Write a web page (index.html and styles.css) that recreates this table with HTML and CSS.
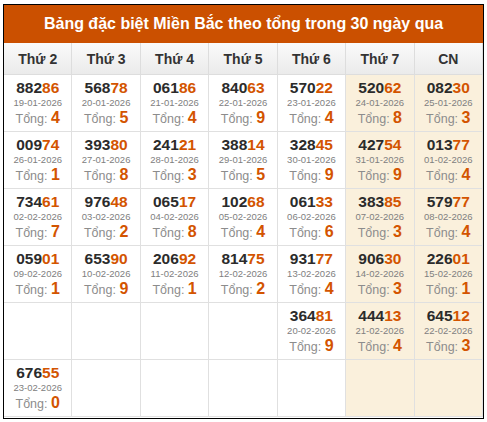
FILE: index.html
```html
<!DOCTYPE html>
<html lang="vi">
<head>
<meta charset="utf-8">
<title>Bảng đặc biệt Miền Bắc theo tổng</title>
<link rel="stylesheet" href="styles.css">
</head>
<body>
<div class="box">
  <div class="title">Bảng đặc biệt Miền Bắc theo tổng trong 30 ngày qua</div>
  <div class="grid">
    <div class="th">Thứ 2</div><div class="th">Thứ 3</div><div class="th">Thứ 4</div><div class="th">Thứ 5</div><div class="th">Thứ 6</div><div class="th">Thứ 7</div><div class="th">CN</div>

    <div class="td"><div class="num">882<span>86</span></div><div class="date">19-01-2026</div><div class="sum">Tổng: <b>4</b></div></div>
    <div class="td"><div class="num">568<span>78</span></div><div class="date">20-01-2026</div><div class="sum">Tổng: <b>5</b></div></div>
    <div class="td"><div class="num">061<span>86</span></div><div class="date">21-01-2026</div><div class="sum">Tổng: <b>4</b></div></div>
    <div class="td"><div class="num">840<span>63</span></div><div class="date">22-01-2026</div><div class="sum">Tổng: <b>9</b></div></div>
    <div class="td"><div class="num">570<span>22</span></div><div class="date">23-01-2026</div><div class="sum">Tổng: <b>4</b></div></div>
    <div class="td we"><div class="num">520<span>62</span></div><div class="date">24-01-2026</div><div class="sum">Tổng: <b>8</b></div></div>
    <div class="td we"><div class="num">082<span>30</span></div><div class="date">25-01-2026</div><div class="sum">Tổng: <b>3</b></div></div>

    <div class="td"><div class="num">009<span>74</span></div><div class="date">26-01-2026</div><div class="sum">Tổng: <b>1</b></div></div>
    <div class="td"><div class="num">393<span>80</span></div><div class="date">27-01-2026</div><div class="sum">Tổng: <b>8</b></div></div>
    <div class="td"><div class="num">241<span>21</span></div><div class="date">28-01-2026</div><div class="sum">Tổng: <b>3</b></div></div>
    <div class="td"><div class="num">388<span>14</span></div><div class="date">29-01-2026</div><div class="sum">Tổng: <b>5</b></div></div>
    <div class="td"><div class="num">328<span>45</span></div><div class="date">30-01-2026</div><div class="sum">Tổng: <b>9</b></div></div>
    <div class="td we"><div class="num">427<span>54</span></div><div class="date">31-01-2026</div><div class="sum">Tổng: <b>9</b></div></div>
    <div class="td we"><div class="num">013<span>77</span></div><div class="date">01-02-2026</div><div class="sum">Tổng: <b>4</b></div></div>

    <div class="td"><div class="num">734<span>61</span></div><div class="date">02-02-2026</div><div class="sum">Tổng: <b>7</b></div></div>
    <div class="td"><div class="num">976<span>48</span></div><div class="date">03-02-2026</div><div class="sum">Tổng: <b>2</b></div></div>
    <div class="td"><div class="num">065<span>17</span></div><div class="date">04-02-2026</div><div class="sum">Tổng: <b>8</b></div></div>
    <div class="td"><div class="num">102<span>68</span></div><div class="date">05-02-2026</div><div class="sum">Tổng: <b>4</b></div></div>
    <div class="td"><div class="num">061<span>33</span></div><div class="date">06-02-2026</div><div class="sum">Tổng: <b>6</b></div></div>
    <div class="td we"><div class="num">383<span>85</span></div><div class="date">07-02-2026</div><div class="sum">Tổng: <b>3</b></div></div>
    <div class="td we"><div class="num">579<span>77</span></div><div class="date">08-02-2026</div><div class="sum">Tổng: <b>4</b></div></div>

    <div class="td"><div class="num">059<span>01</span></div><div class="date">09-02-2026</div><div class="sum">Tổng: <b>1</b></div></div>
    <div class="td"><div class="num">653<span>90</span></div><div class="date">10-02-2026</div><div class="sum">Tổng: <b>9</b></div></div>
    <div class="td"><div class="num">206<span>92</span></div><div class="date">11-02-2026</div><div class="sum">Tổng: <b>1</b></div></div>
    <div class="td"><div class="num">814<span>75</span></div><div class="date">12-02-2026</div><div class="sum">Tổng: <b>2</b></div></div>
    <div class="td"><div class="num">931<span>77</span></div><div class="date">13-02-2026</div><div class="sum">Tổng: <b>4</b></div></div>
    <div class="td we"><div class="num">906<span>30</span></div><div class="date">14-02-2026</div><div class="sum">Tổng: <b>3</b></div></div>
    <div class="td we"><div class="num">226<span>01</span></div><div class="date">15-02-2026</div><div class="sum">Tổng: <b>1</b></div></div>

    <div class="td"></div>
    <div class="td"></div>
    <div class="td"></div>
    <div class="td"></div>
    <div class="td"><div class="num">364<span>81</span></div><div class="date">20-02-2026</div><div class="sum">Tổng: <b>9</b></div></div>
    <div class="td we"><div class="num">444<span>13</span></div><div class="date">21-02-2026</div><div class="sum">Tổng: <b>4</b></div></div>
    <div class="td we"><div class="num">645<span>12</span></div><div class="date">22-02-2026</div><div class="sum">Tổng: <b>3</b></div></div>

    <div class="td"><div class="num">676<span>55</span></div><div class="date">23-02-2026</div><div class="sum">Tổng: <b>0</b></div></div>
    <div class="td"></div>
    <div class="td"></div>
    <div class="td"></div>
    <div class="td"></div>
    <div class="td we"></div>
    <div class="td we"></div>
  </div>
</div>
</body>
</html>
```

FILE: styles.css
```css
* { box-sizing: border-box; }
html, body { margin: 0; padding: 0; background: #fff; }
body { font-family: "Liberation Sans", Arial, sans-serif; }

.box {
  margin: 4px 0 0 3px;
  width: 481px;
  height: 415px;
  border: 1px solid #000;
  background: #fff;
}

.title {
  height: 38px;
  background: #cb5000;
  color: #fff;
  font-weight: bold;
  font-size: 16px;
  display: flex;
  align-items: center;
  justify-content: center;
}

.grid {
  display: grid;
  grid-template-columns: repeat(7, 1fr);
  grid-template-rows: 32px repeat(6, 57px);
}

.th {
  border-right: 1px solid #ddd;
  border-bottom: 1px solid #ddd;
  background: linear-gradient(#fafafa, #ebebeb);
  color: #333;
  font-weight: bold;
  font-size: 14px;
  display: flex;
  align-items: center;
  justify-content: center;
}

.td {
  border-right: 1px solid #e0e0e0;
  border-bottom: 1px solid #e0e0e0;
  text-align: center;
  padding-top: 4px;
}

.td.we { background: #faf0dc; }

.num {
  font-weight: bold;
  font-size: 15.5px;
  line-height: 18px;
  color: #2b2b2b;
}
.num span { color: #d35400; }

.date {
  font-size: 9.5px;
  line-height: 12px;
  color: #808080;
}

.sum {
  font-size: 12.5px;
  line-height: 17px;
  color: #8c8c8c;
}
.sum b {
  font-size: 16px;
  color: #d35400;
}
```
